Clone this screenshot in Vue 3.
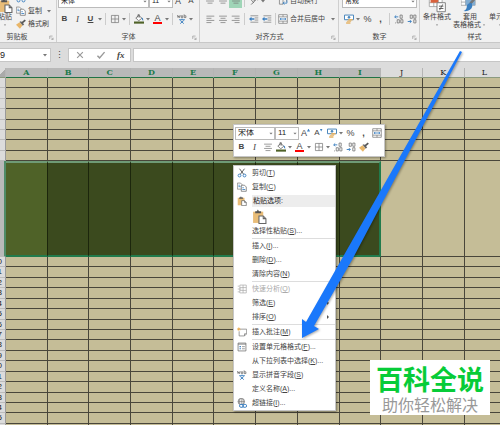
<script setup>
import { h } from 'vue'

const Ico = (props) =>
  h('svg', { class: 'ico', viewBox: '0 0 14 14', 'aria-hidden': 'true' }, [h('use', { href: '#' + props.name })])
Ico.props = ['name']

const Caret = () =>
  h('svg', { class: 'caret', viewBox: '0 0 6 14', 'aria-hidden': 'true' }, [
    h('path', { d: 'M1 6h4L3 8.4z', fill: '#777' })
  ])

const columns = 'ABCDEFGHIJKL'.split('')
const selectedCount = 9

const heights = [10, 11, 10, 11, 10, 10, 11, 10, 96, 10, 11, 10, 11, 10, 11, 10, 10, 11, 10, 11, 10, 11, 10, 10, 11, 10]
const rows = heights.map((height, i) => ({ n: i + 1, height }))

const menu = [
  { text: '剪切', key: 'T', icon: 'cut' },
  { text: '复制', key: 'C', icon: 'copy' },
  { heading: '粘贴选项:', icon: 'paste' },
  { paste: true },
  { text: '选择性粘贴', key: 'S', dots: true },
  { sep: true },
  { text: '插入', key: 'I', dots: true },
  { text: '删除', key: 'D', dots: true },
  { text: '清除内容', key: 'N' },
  { sep: true },
  { text: '快速分析', key: 'Q', icon: 'quick', disabled: true },
  { text: '筛选', key: 'E', sub: true },
  { text: '排序', key: 'O', sub: true },
  { sep: true },
  { text: '插入批注', key: 'M', icon: 'note' },
  { sep: true },
  { text: '设置单元格格式', key: 'F', dots: true, icon: 'format' },
  { text: '从下拉列表中选择', key: 'K', dots: true },
  { text: '显示拼音字段', key: 'S', icon: 'pinyin' },
  { text: '定义名称', key: 'A', dots: true },
  { text: '超链接', key: 'I', dots: true, icon: 'link' }
]
</script>

<template>
  <div class="app">
    <svg class="defs" aria-hidden="true">
      <symbol id="cut" viewBox="0 0 14 14">
        <path d="M3.500 1l6 8M10.500 1l-6 8" stroke="#555" stroke-width="1.300" fill="none" />
        <circle cx="3.500" cy="10.500" r="2" stroke="#3b7fc0" stroke-width="1.300" fill="none" />
        <circle cx="10.500" cy="10.500" r="2" stroke="#3b7fc0" stroke-width="1.300" fill="none" />
      </symbol>
      <symbol id="copy" viewBox="0 0 14 14">
        <path d="M.5 1.500h4.500l2 2v6.500H.5z" fill="#fff" stroke="#777" />
        <path d="M6 4.500h4.500l2.500 2.500v6H6z" fill="#fff" stroke="#666" />
        <path d="M2 4.500h2M2 6.500h3M7.500 8h2M7.500 10.500h4" stroke="#3b7fc0" stroke-width="1.200" />
      </symbol>
      <symbol id="paste" viewBox="0 0 14 14">
        <path d="M1 2.500h9.500V13H1z" fill="#e9bd78" />
        <path d="M3 4V2h1.500l1-1.500 1 1.500H8.500v2z" fill="#555" />
        <path d="M6.500 6.500h4l2.500 2.500v4.500h-6.500z" fill="#fff" stroke="#666" />
        <path d="M10.500 6.500v2.500h2.500" fill="none" stroke="#666" />
      </symbol>
      <symbol id="brush" viewBox="0 0 14 14">
        <path d="M0 8l5-3.500 4 4.500-3.500 4.500z" fill="#e9b669" />
        <path d="M5 4l2-1 4.500 4.500L9.500 9.500z" fill="#666" />
        <path d="M8.500 5.500L13 1.500" stroke="#555" stroke-width="2.400" />
      </symbol>
      <symbol id="border" viewBox="0 0 14 14">
        <path d="M2 2h10v10H2zM7 2v10M2 7h10" fill="none" stroke="#777" />
      </symbol>
      <symbol id="bucket" viewBox="0 0 14 14">
        <path d="M2.500 5.500L7 2l4 4-4.500 3.500z" fill="#fff" stroke="#555" />
        <path d="M5.500 5V1h2v4" fill="none" stroke="#555" />
        <path d="M10.500 4.500q3 1 2.500 5-2-.5-2.500-5" fill="#3b7fc0" />
        <path d="M0 10.500h14v3H0z" fill="#4f6228" />
      </symbol>
      <symbol id="left" viewBox="0 0 14 14">
        <path d="M2 3h11M2 6h7M2 9h11M2 12h7" stroke="#777" />
      </symbol>
      <symbol id="center" viewBox="0 0 14 14">
        <path d="M1.500 3h11M3.500 6h7M1.500 9h11M3.500 12h7" stroke="#777" />
      </symbol>
      <symbol id="right" viewBox="0 0 14 14">
        <path d="M1 3h11M5 6h7M1 9h11M5 12h7" stroke="#777" />
      </symbol>
      <symbol id="lines" viewBox="0 0 14 14">
        <path d="M1.500 7h11M3.500 10h7" stroke="#777" />
      </symbol>
      <symbol id="indent" viewBox="0 0 14 14">
        <path d="M2 2.500h11M8 5.500h5M8 8.500h5M2 11.500h11" stroke="#777" />
        <path d="M0 7l3.500-3v2h4v2h-4v2z" fill="#3b7fc0" />
      </symbol>
      <symbol id="merge" viewBox="0 0 14 14">
        <path d="M1 1h12v12H1zM1 4h12M1 10h12M7 1v3M7 10v3" fill="#fff" stroke="#777" />
        <path d="M3 7h8M4.500 5.500L3 7l1.500 1.500M9.500 5.500L11 7 9.500 8.500" fill="none" stroke="#3b7fc0" stroke-width="1.200" />
      </symbol>
      <symbol id="wrap" viewBox="0 0 14 14">
        <path d="M2 2.500h5v9H2zM8 4h4v4" fill="none" stroke="#777" />
        <path d="M12.500 6v4H7l2-2M7 10l2 2" fill="none" stroke="#3b7fc0" stroke-width="1.200" />
      </symbol>
      <symbol id="money" viewBox="0 0 14 14">
        <path d="M.7 1.500h12.600v6.500H.7z" fill="#fff" stroke="#4c88bd" stroke-width="1.400" />
        <circle cx="7" cy="4.700" r="1.800" fill="#4c88bd" />
        <path d="M6 7h6v2H6zM4 9.500h6v1.500H4zM3 11.500h6v2H3z" fill="#e5b265" />
      </symbol>
      <symbol id="decleft" viewBox="0 0 14 14">
        <path d="M1 4h5M3 2L1 4l2 2" fill="none" stroke="#3b7fc0" stroke-width="1.300" />
        <path d="M8.500 1.500h3v4.500h-3zM4.500 8h3v4.500h-3zM9.500 8h3v4.500h-3z" fill="none" stroke="#666" />
        <path d="M1.500 12.500h1.200" stroke="#666" />
      </symbol>
      <symbol id="decright" viewBox="0 0 14 14">
        <path d="M4.500 1.500h3V6h-3zM9.500 1.500h3V6h-3zM9.500 8h3v4.500h-3z" fill="none" stroke="#666" />
        <path d="M1 10.500h5M4 8.500l2 2-2 2" fill="none" stroke="#3b7fc0" stroke-width="1.300" />
      </symbol>
      <symbol id="quick" viewBox="0 0 14 14">
        <path d="M4 1.500h9v11H4zM4 5h9M4 9h9M8.500 1.500v11M1 3h2M1 7h5M1 11h3" fill="none" stroke="#aaa" />
      </symbol>
      <symbol id="note" viewBox="0 0 14 14">
        <path d="M4 3h9.500v6.500l-3 3H3V6" fill="#fff" stroke="#777" />
        <path d="M10.500 12.500v-3h3" fill="none" stroke="#777" />
        <path d="M0 3h5M2.500.5v5M1 1.500l3 3M4 1.500l-3 3" stroke="#e5a545" />
      </symbol>
      <symbol id="format" viewBox="0 0 14 14">
        <path d="M1.500 1.500h11v11h-11zM1.500 3h11" fill="#fff" stroke="#666" />
        <path d="M3.500 6.500h2M3.500 9.500h2" stroke="#3b7fc0" stroke-width="1.600" />
        <path d="M7 6.500h4M7 9.500h4" stroke="#777" />
      </symbol>
      <symbol id="pinyin" viewBox="0 0 14 14">
        <path d="M.5 1.500l1 3.500 1-2.500 1 2.500 1-3.500M6 5V2.500h2V5zM10 .5V5h2.500V2.500H10" fill="none" stroke="#666" />
        <path d="M3 8h8M7 6.500V8M4.500 9l5 4.500M9.500 9l-5 4.500" fill="none" stroke="#3b7fc0" stroke-width="1.300" />
      </symbol>
      <symbol id="link" viewBox="0 0 14 14">
        <circle cx="6" cy="5" r="4.500" fill="#fff" stroke="#666" />
        <path d="M1.500 5h9M6 .5v9M4 1q-1.500 4 0 8M8 1q1.500 4 0 8" fill="none" stroke="#666" stroke-width=".8" />
        <rect x="3.500" y="9" width="5.500" height="4" rx="2" fill="#fff" stroke="#3b7fc0" stroke-width="1.400" />
        <rect x="8" y="9" width="5.500" height="4" rx="2" fill="none" stroke="#3b7fc0" stroke-width="1.400" />
      </symbol>
      <symbol id="orient" viewBox="0 0 14 14">
        <path d="M3 12l9-9M9 3h3v3M3 5.500l4 4M4 3l4 4" fill="none" stroke="#666" stroke-width="1.200" />
      </symbol>
      <symbol id="launch" viewBox="0 0 14 14">
        <path d="M2 11V3h8M6 7l5 5M11.500 7.500v5h-5" fill="none" stroke="#888" stroke-width="1.600" />
      </symbol>
      <symbol id="cond" viewBox="0 0 14 14">
        <path d="M1 0h10v9H1zM1 3h10M1 6h10M4.500 0v9M8 0v9" fill="#fff" stroke="#999" stroke-width=".6" />
        <path d="M4.500 0H8v3H4.500z" fill="#4c88bd" />
        <path d="M2 3h6v3H2z" fill="#d9623d" />
        <path d="M7 6h6.500v7H7z" fill="#fff" stroke="#777" stroke-width=".7" />
        <path d="M8.500 8.700h3.500M8.500 10.500h3.500M11.500 7.300L9 11.800" stroke="#555" stroke-width=".7" />
      </symbol>
      <symbol id="tablefmt" viewBox="0 0 14 14">
        <path d="M0 0h11v8H0zM0 3h11M0 5.500h11M3.500 0v8M7 0v8" fill="#fff" stroke="#999" stroke-width=".6" />
        <path d="M3.500 3H11v5H3.500z" fill="#82add2" />
        <path d="M13 0L7 7" stroke="#777" stroke-width="2" />
        <path d="M8 6q2 3-1 5.500-2 1.500-5 1 2.500-1 2.500-3.500T8 6" fill="#3b7fc0" />
      </symbol>
    </svg>

    <header class="ribbon">
      <section class="group clip">
        <button class="big paste-big"><Ico name="paste" class="large" /><span>粘贴</span><Caret /></button>
        <div class="stack">
          <button class="tool-text" aria-label="剪切"><Ico name="cut" /></button>
          <button class="tool-text"><Ico name="copy" /><span>复制</span><Caret class="apart" /></button>
          <button class="tool-text"><Ico name="brush" /><span>格式刷</span></button>
        </div>
        <footer><span>剪贴板</span><Ico name="launch" class="launch" /></footer>
      </section>

      <section class="group font">
        <div class="line">
          <label class="pick grow"><select aria-label="字体"><option>宋体</option></select><Caret /></label>
          <label class="pick size"><select aria-label="字号"><option>11</option></select><Caret /></label>
          <button class="tool big-a" aria-label="增大字号">A</button>
          <button class="tool small-a" aria-label="减小字号">A</button>
        </div>
        <div class="line second">
          <button class="tool bold">B</button>
          <button class="tool italic">I</button>
          <button class="tool under">U</button><Caret />
          <i class="bar"></i>
          <button class="tool" aria-label="边框"><Ico name="border" /></button><Caret />
          <i class="bar"></i>
          <button class="tool" aria-label="填充颜色"><Ico name="bucket" /></button><Caret />
          <button class="tool fontcolor"><span>A</span></button><Caret />
          <i class="bar"></i>
          <button class="tool" aria-label="拼音"><Ico name="pinyin" /></button><Caret />
        </div>
        <footer><span>字体</span><Ico name="launch" class="launch" /></footer>
      </section>

      <section class="group align">
        <div class="line">
          <button class="tool" aria-label="顶端对齐"><Ico name="lines" /></button>
          <button class="tool" aria-label="垂直居中"><Ico name="lines" /></button>
          <button class="tool active" aria-label="底端对齐"><Ico name="lines" /></button>
          <i class="bar"></i>
          <button class="tool" aria-label="方向"><Ico name="orient" /></button><Caret />
          <span class="fill"></span>
          <button class="tool-text wide"><Ico name="wrap" /><span>自动换行</span></button>
        </div>
        <div class="line second">
          <button class="tool" aria-label="左对齐"><Ico name="left" /></button>
          <button class="tool" aria-label="居中"><Ico name="center" /></button>
          <button class="tool" aria-label="右对齐"><Ico name="right" /></button>
          <i class="bar"></i>
          <button class="tool" aria-label="减少缩进"><Ico name="indent" /></button>
          <button class="tool" aria-label="增加缩进"><Ico name="indent" /></button>
          <i class="bar"></i>
          <span class="fill"></span>
          <button class="tool-text wide"><Ico name="merge" /><span>合并后居中</span><Caret class="apart" /></button>
        </div>
        <footer><span>对齐方式</span><Ico name="launch" class="launch" /></footer>
      </section>

      <section class="group number">
        <div class="line">
          <label class="pick grow"><select aria-label="数字格式"><option>常规</option></select><Caret /></label>
        </div>
        <div class="line second">
          <button class="tool" aria-label="会计格式"><Ico name="money" /></button><Caret />
          <button class="tool">%</button>
          <button class="tool comma">,</button>
          <i class="bar"></i>
          <button class="tool" aria-label="增加小数位"><Ico name="decleft" /></button>
          <button class="tool" aria-label="减少小数位"><Ico name="decright" /></button>
        </div>
        <footer><span>数字</span><Ico name="launch" class="launch" /></footer>
      </section>

      <section class="group styles">
        <div class="bigs">
          <button class="big"><Ico name="cond" class="large" /><span>条件格式</span><Caret /></button>
          <button class="big"><Ico name="tablefmt" class="large" /><span>套用</span><span class="inline">表格格式<Caret /></span></button>
          <button class="big"><span>单元格</span><Caret /></button>
        </div>
        <footer><span>样式</span></footer>
      </section>
    </header>

    <div class="formula">
      <label class="namebox"><input value="9" aria-label="名称框" /><Caret /></label>
      <span class="dots">⋮</span>
      <div class="fxbox">
        <button aria-label="取消"><svg class="ico" viewBox="0 0 14 14"><path d="M3 3l8 8M11 3l-8 8" stroke="#999" stroke-width="1.600" /></svg></button>
        <button aria-label="输入"><svg class="ico" viewBox="0 0 14 14"><path d="M2 8l3 3 7-8" fill="none" stroke="#999" stroke-width="2" /></svg></button>
        <button class="fx">fx</button>
      </div>
      <input class="entry" aria-label="编辑栏" />
    </div>

    <table class="sheet">
      <colgroup><col class="rowhead" /><col v-for="c in columns" :key="c" :class="{ full: c !== 'L' }" /></colgroup>
      <thead>
        <tr>
          <th class="corner"></th>
          <th v-for="(c, i) in columns" :key="c" :class="{ on: i < selectedCount, partial: c === 'L' }">{{ c }}</th>
        </tr>
      </thead>
      <tbody>
        <tr v-for="r in rows" :key="r.n" :class="{ picked: r.n === 9 }" :style="{ height: r.height + 'px' }">
          <th><div v-if="r.n > 9" class="num">{{ r.n }}</div></th>
          <td v-for="(c, i) in columns" :key="c" :class="{ sel: i < selectedCount, last: i === selectedCount - 1, first: i === 0 }"></td>
        </tr>
      </tbody>
    </table>

    <div class="mini">
      <div class="line">
        <label class="pick mini-font"><select aria-label="字体"><option>宋体</option></select><Caret /></label>
        <label class="pick mini-size"><select aria-label="字号"><option>11</option></select><Caret /></label>
        <button class="tool big-a" aria-label="增大字号">A</button>
        <button class="tool small-a" aria-label="减小字号">A</button>
        <button class="tool" aria-label="会计格式"><Ico name="money" /></button><Caret />
        <button class="tool">%</button>
        <button class="tool comma">,</button>
        <button class="tool" aria-label="合并后居中"><Ico name="merge" /></button>
      </div>
      <div class="line">
        <button class="tool bold">B</button>
        <button class="tool italic">I</button>
        <button class="tool" aria-label="居中"><Ico name="center" /></button>
        <button class="tool" aria-label="填充颜色"><Ico name="bucket" /></button><Caret />
        <button class="tool fontcolor"><span>A</span></button><Caret />
        <button class="tool" aria-label="边框"><Ico name="border" /></button><Caret />
        <button class="tool" aria-label="增加小数位"><Ico name="decleft" /></button>
        <button class="tool" aria-label="减少小数位"><Ico name="decright" /></button>
        <button class="tool" aria-label="格式刷"><Ico name="brush" /></button>
      </div>
    </div>

    <div class="menu" role="menu">
      <template v-for="(m, i) in menu" :key="i">
        <hr v-if="m.sep" />
        <div v-else-if="m.heading" class="item"><Ico :name="m.icon" /><span class="heading">{{ m.heading }}</span></div>
        <button v-else-if="m.paste" class="item paste-row" role="menuitem" aria-label="粘贴"><span></span><Ico name="paste" class="large" /></button>
        <button v-else class="item" role="menuitem" :disabled="m.disabled">
          <Ico v-if="m.icon" :name="m.icon" /><span v-else></span>
          <span class="label">{{ m.text }}(<u>{{ m.key }}</u>){{ m.dots ? '...' : '' }}</span>
          <svg v-if="m.sub" class="sub" viewBox="0 0 4 6" aria-hidden="true"><path d="M0 1l2 2-2 2z" fill="#555" /></svg>
        </button>
      </template>
    </div>

    <svg class="arrow" viewBox="0 0 164 290" aria-hidden="true">
      <polygon points="161,1 163,2 53,210 15,276 20,279 3,288 3,269 7,272 45,205" fill="#1a78fb" />
    </svg>

    <aside class="brand">
      <strong>百科全说</strong>
      <span>助你轻松解决</span>
    </aside>
  </div>
</template>

<style>
html, body { margin: 0; overflow: hidden; }
</style>

<style scoped>
.app {
  position: relative;
  height: 100vh;
  overflow: hidden;
  background: #dcdcdc;
  color: #444;
  font: 7px/8px "Liberation Sans", "Noto Sans CJK SC", sans-serif;
}
.app *, .app *::before { box-sizing: border-box; }
.defs { display: none; }
button, select, input {
  margin: 0;
  padding: 0;
  border: 0;
  background: none;
  color: inherit;
  font: inherit;
  appearance: none;
  outline: 0;
}
.ico { width: 10px; height: 10px; flex: none; display: block; }
.ico.large { width: 15px; height: 15px; }
.caret { width: 6px; height: 14px; flex: none; display: block; }

.ribbon {
  display: flex;
  height: 43px;
  background: #f1f1f1;
  border-bottom: 1px solid #c8c8c8;
}
.group {
  flex: none;
  display: flex;
  flex-direction: column;
  justify-content: flex-end;
  overflow: hidden;
  padding-left: 1px;
  border-right: 1px solid #cfcfcf;
}
.group footer {
  display: flex;
  align-items: center;
  justify-content: center;
  height: 10px;
  flex: none;
  position: relative;
}
.group .launch { position: absolute; right: 2px; top: 3px; width: 5px; height: 5px; }
.font { width: 143px; }
.align { width: 139px; }
.number { width: 81px; }
.styles { flex: 1; min-width: 0; border: 0; }
.styles footer { padding-left: 28px; }
.clip {
  width: 57px;
  display: grid;
  grid-template: 32px 10px / 14px 1fr;
  padding: 0;
}
.clip footer { grid-column: 1 / 3; padding-right: 22px; }
.clip .stack { display: flex; flex-direction: column; justify-content: flex-end; padding: 0 0 2px 2px; }
.line { display: flex; align-items: center; height: 14px; flex: none; }
.second { margin: 4px 0 6px; }
.tool {
  width: 13px;
  height: 13px;
  flex: none;
  display: flex;
  align-items: center;
  justify-content: center;
  font-size: 9px;
}
.bold { font-weight: bold; font-size: 8px; }
.italic { font: italic 9px "Liberation Serif", serif; }
.under { text-decoration: underline; font-size: 8px; font-weight: bold; }
.small-a { font-size: 8px; }
.big-a::after, .small-a::after {
  content: "";
  width: 3px;
  height: 3px;
  margin-bottom: 6px;
  background: #3b7fc0;
  clip-path: polygon(0 100%, 50% 0, 100% 100%);
}
.small-a::after { clip-path: polygon(0 0, 100% 0, 50% 100%); }
.comma { font-weight: bold; }
.fontcolor span { width: 9px; line-height: 8px; border-bottom: 2px solid #f00; }
.bar { flex: none; width: 1px; height: 12px; margin: 0 2px; background: #ccc; }
.fill { flex: 1; }
.active { background: #9fd5b7; }
.tool-text { display: flex; align-items: center; gap: 2px; height: 13px; flex: none; white-space: nowrap; }
.wide { width: 58px; margin-right: 2px; }
.apart { margin-left: auto; }
.stack .apart { margin-left: 2px; }
.pick { display: grid; grid-template-columns: 1fr 6px; background: #fff; border: 1px solid #bbb; height: 13px; align-items: center; }
.pick select { grid-area: 1 / 1 / 2 / 3; width: 100%; height: 11px; padding-left: 2px; color: #222; }
.pick .caret { grid-area: 1 / 2; height: 11px; pointer-events: none; }
.grow { flex: 1; }
.size { width: 24px; }
.number .grow { margin-right: 2px; }
.number .line, .align .line { padding-left: 2px; }
.big {
  display: flex;
  flex-direction: column;
  align-items: center;
  justify-content: flex-end;
  height: 29px;
  flex: none;
  white-space: nowrap;
}
.big .caret { height: 8px; }
.inline { display: flex; }
.paste-big { width: 10px; }
.bigs { display: flex; gap: 2px; margin-bottom: 3px; padding-left: 2px; }
.styles .large { width: 18px; height: 18px; }

.formula { display: flex; align-items: center; height: 25px; padding-bottom: 1px; }
.namebox { display: flex; align-items: center; width: 51px; height: 14px; background: #fff; border: 1px solid #c6c6c6; border-left: 0; padding-right: 2px; }
.namebox input { flex: 1; min-width: 0; font-size: 9px; color: #222; }
.dots { width: 17px; text-align: center; font-size: 9px; }
.fxbox { display: flex; align-items: center; justify-content: space-around; width: 63px; height: 14px; background: #fff; border: 1px solid #c6c6c6; }
.fx { font: italic bold 9px "Liberation Serif", serif; }
.entry { flex: 1; min-width: 0; height: 14px; margin-left: 2px; background: #fff; border: 1px solid #c6c6c6; border-right: 0; }

.sheet { width: 100%; table-layout: fixed; border-collapse: separate; border-spacing: 0; }
.sheet th, .sheet td { padding: 0; }
.rowhead { width: 6px; }
.full { width: 8.340%; }
.sheet thead th {
  height: 10px;
  font: 8px/9px "DejaVu Serif", serif;
  color: #222;
  border-right: 1px solid #b5b5b5;
  border-bottom: 1px solid #8b9a80;
}
.sheet thead .on { background: #b9b9b9; color: #1b7a4a; font-weight: bold; border-bottom-color: #217346; }
.sheet thead .partial { padding-left: 4px; border-right: 0; }
.sheet thead .corner { background: linear-gradient(135deg, #dcdcdc 50%, #aaa 50%); }
.sheet tbody th { background: #dcdcdc; border-right: 1px solid #9a9a9a; border-bottom: 1px solid #bbb; }
.num { display: flex; justify-content: flex-end; height: 8px; overflow: hidden; padding-right: 3px; font: 8px/8px "Liberation Sans", sans-serif; color: #222; }
.sheet td { background: #c5bd97; border-right: 1px solid #49463a; border-bottom: 1px solid #49463a; }
.sheet td:last-child { border-right: 0; }
.sheet .picked .sel { background: #3b4a1e; border-right-color: #1c260c; border-bottom: 2px solid #217b4c; border-top: 2px solid #6f9b76; }
.sheet .picked .first { background: #4f6228; }
.sheet .picked .last { border-right: 2px solid #217b4c; }
.sheet .picked th { background: #b9b9b9; border-right: 2px solid #4f8b67; }

.mini {
  position: absolute;
  left: 233px;
  top: 124px;
  display: flex;
  flex-direction: column;
  padding: 1px 1px 2px;
  background: #fff;
  border: 1px solid #c6c6c6;
  box-shadow: 1px 1px 2px #0005;
}
.mini-font { width: 40px; }
.mini-size { width: 24px; }
.mini .pick { font-size: 8px; }

.menu {
  position: absolute;
  left: 233px;
  top: 165px;
  width: 103px;
  background: #fff;
  border: 1px solid #c6c6c6;
  box-shadow: 1px 1px 2px #0006;
}
.item {
  display: grid;
  grid-template-columns: 13px 1fr auto;
  align-items: center;
  column-gap: 2px;
  width: 100%;
  height: 14px;
  padding-left: 3px;
  text-align: left;
  white-space: nowrap;
  color: #444;
}
.item:disabled { color: #aaa; }
.paste-row { height: 16px; }
.heading { background: #ededed; line-height: 12px; padding-left: 1px; color: #222; grid-column: 2 / 4; }
.sub { width: 4px; height: 6px; margin-right: 4px; }
.menu hr { height: 1px; margin: 0 0 0 18px; border: 0; background: #ddd; }

.arrow { position: absolute; left: 299px; top: 50px; width: 164px; height: 290px; filter: drop-shadow(1px 1px 1px #0005); pointer-events: none; }

.brand {
  position: absolute;
  left: 370px;
  top: 360px;
  width: 120px;
  height: 55px;
  display: flex;
  flex-direction: column;
  align-items: center;
  padding-top: 4px;
  background: #fff;
  font-family: "Noto Sans CJK SC", sans-serif;
}
.brand strong { font-size: 27px; line-height: 30px; font-weight: 700; color: #07cc38; }
.brand span { font-size: 16px; line-height: 20px; color: #999; }
</style>
